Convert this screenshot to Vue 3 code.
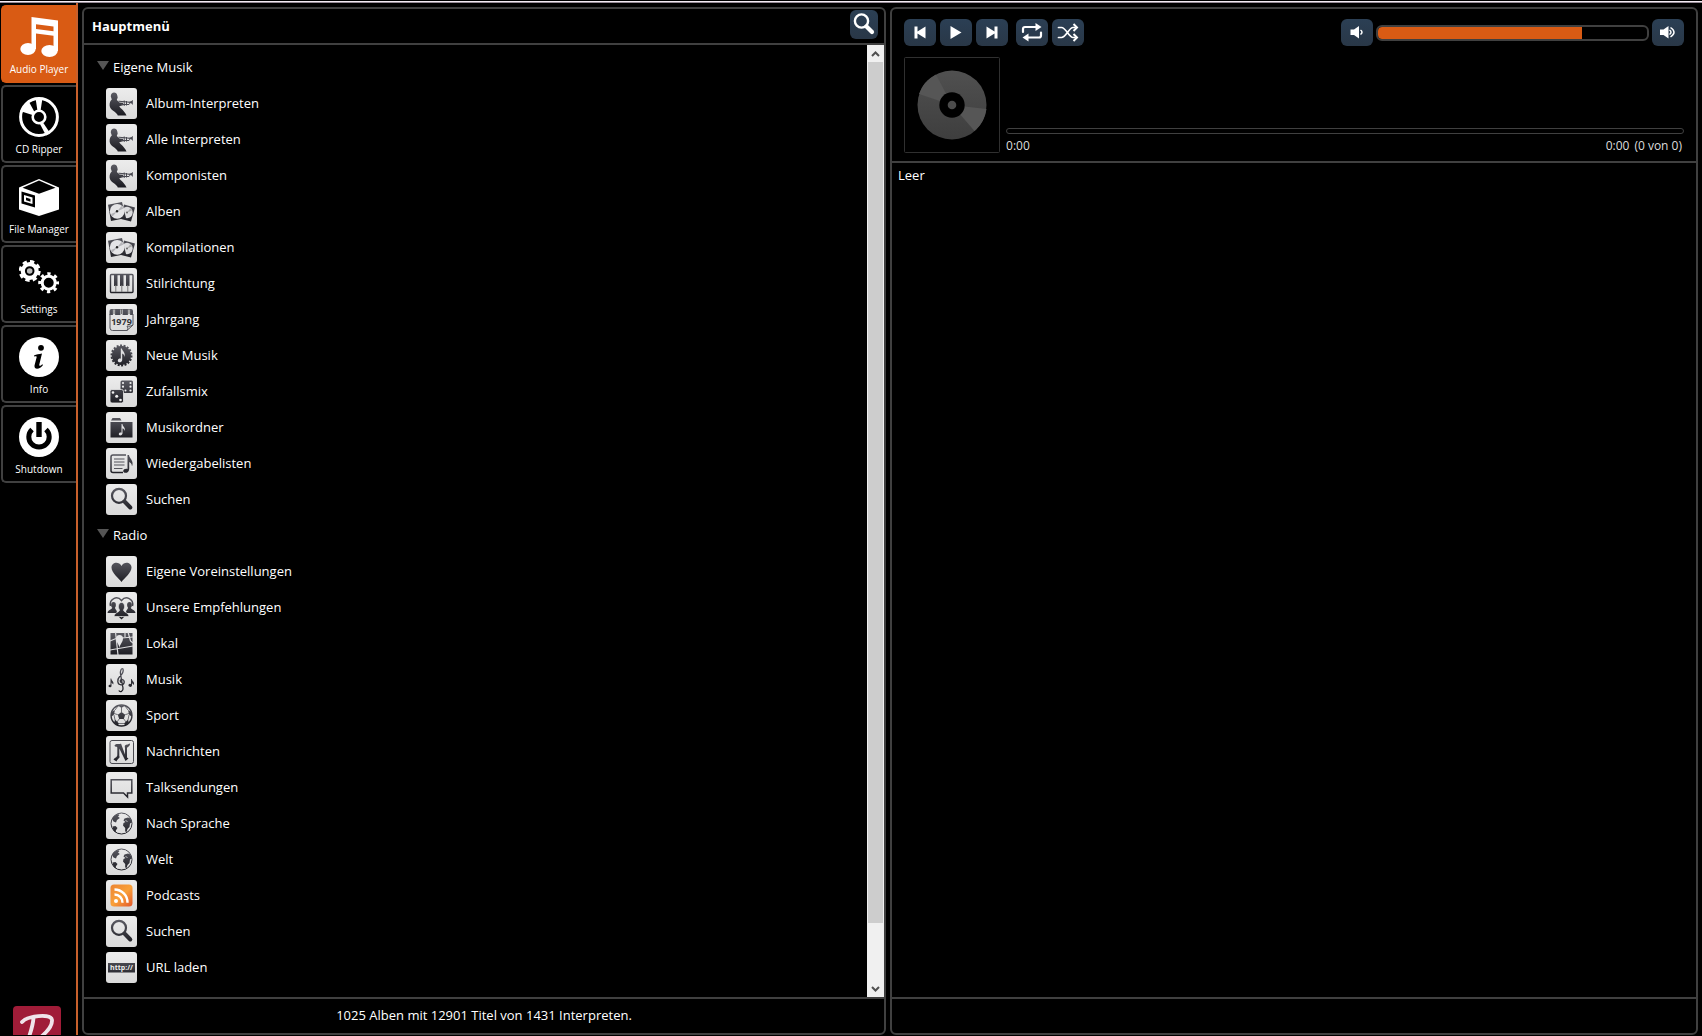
<script setup>
import { ref } from 'vue'

const tabs = [
  { label: 'Audio Player', icon: 'player' },
  { label: 'CD Ripper', icon: 'ripper' },
  { label: 'File Manager', icon: 'files' },
  { label: 'Settings', icon: 'settings' },
  { label: 'Info', icon: 'info' },
  { label: 'Shutdown', icon: 'power' },
]
const activeTab = ref('player')

const groups = [
  {
    title: 'Eigene Musik',
    items: [
      { label: 'Album-Interpreten', icon: 'artist' },
      { label: 'Alle Interpreten', icon: 'artist' },
      { label: 'Komponisten', icon: 'artist' },
      { label: 'Alben', icon: 'album' },
      { label: 'Kompilationen', icon: 'album' },
      { label: 'Stilrichtung', icon: 'piano' },
      { label: 'Jahrgang', icon: 'year' },
      { label: 'Neue Musik', icon: 'new' },
      { label: 'Zufallsmix', icon: 'dice' },
      { label: 'Musikordner', icon: 'folder' },
      { label: 'Wiedergabelisten', icon: 'playlist' },
      { label: 'Suchen', icon: 'search' },
    ],
  },
  {
    title: 'Radio',
    items: [
      { label: 'Eigene Voreinstellungen', icon: 'heart' },
      { label: 'Unsere Empfehlungen', icon: 'people' },
      { label: 'Lokal', icon: 'map' },
      { label: 'Musik', icon: 'clef' },
      { label: 'Sport', icon: 'ball' },
      { label: 'Nachrichten', icon: 'news' },
      { label: 'Talksendungen', icon: 'talk' },
      { label: 'Nach Sprache', icon: 'globe' },
      { label: 'Welt', icon: 'globe' },
      { label: 'Podcasts', icon: 'rss' },
      { label: 'Suchen', icon: 'search' },
      { label: 'URL laden', icon: 'url' },
    ],
  },
  { title: '', items: [] },
]

const transport = [
  { label: 'Zurück', icon: 'prev' },
  { label: 'Wiedergabe', icon: 'play' },
  { label: 'Weiter', icon: 'next' },
  { label: 'Wiederholen', icon: 'repeat' },
  { label: 'Zufall', icon: 'shuffle' },
]
const volume = ref(76)
</script>

<template>
  <div class="shell">
    <svg class="sprite" width="0" height="0" aria-hidden="true">
      <defs>
        <linearGradient id="ink" gradientUnits="userSpaceOnUse" x1="0" y1="4" x2="0" y2="27">
          <stop offset="0" stop-color="#5c5c64" /><stop offset="1" stop-color="#1c1c22" />
        </linearGradient>
        <linearGradient id="feed" gradientUnits="userSpaceOnUse" x1="5" y1="5" x2="26" y2="27">
          <stop offset="0" stop-color="#ec8532" /><stop offset=".5" stop-color="#f9a13a" /><stop offset="1" stop-color="#e2562a" />
        </linearGradient>
        <linearGradient id="disc" x1="0" y1="0" x2="0" y2="1">
          <stop offset="0" stop-color="#505050" /><stop offset="1" stop-color="#3e3e3e" />
        </linearGradient>

        <!-- navigation, 40 x 40 -->
        <symbol id="player" viewBox="0 0 40 40">
          <path fill="#fff" fill-rule="evenodd" d="M12.5 0L39 3.5V34H34.5V18.8L17 16.5V32H12.5ZM17 7.2V12L34.5 14.2V9.5Z" />
          <ellipse cx="9" cy="32" rx="7.7" ry="6" fill="#fff" /><ellipse cx="30.5" cy="34" rx="8.2" ry="6" fill="#fff" />
        </symbol>
        <symbol id="ripper" viewBox="0 0 40 40">
          <circle cx="20" cy="20" r="18.4" fill="none" stroke="#fff" stroke-width="3" />
          <circle cx="20" cy="20" r="6.3" fill="none" stroke="#fff" stroke-width="2.6" />
          <path fill="#fff" d="M1 14L9.500 4L15.500 15L13.500 18ZM16.500 1H23.500L21.500 14H18.500Z" />
          <path fill="#fff" d="M21 27L24 25.500L31 36L27 38.500Z" />
        </symbol>
        <symbol id="files" viewBox="0 0 40 40">
          <path fill="#fff" d="M20 2L40 10.500V32.500L20 39L0 32.500V10.500Z" />
          <path fill="#000" d="M20 3.600L36.500 10.800L20 16.800L3.500 10.800Z" />
          <path fill="#000" d="M2.500 14.500L16 18.500V30.500L2.500 26.500Z" />
          <path fill="#fff" d="M5 18L13.500 20.500V27L5 24.500Z" /><path fill="#000" d="M7 20.500L11.500 22V24.800L7 23.300Z" />
        </symbol>
        <symbol id="settings" viewBox="0 0 40 40">
          <circle cx="10.700" cy="14" r="9" fill="#fff" />
          <circle cx="10.700" cy="14" r="9.300" fill="none" stroke="#fff" stroke-width="3.400" stroke-dasharray="4.200 3.100" />
          <circle cx="10.700" cy="14" r="3.800" fill="#bbb" stroke="#000" stroke-width="2" />
          <circle cx="29.700" cy="25.700" r="6.500" fill="none" stroke="#fff" stroke-width="3" />
          <circle cx="29.700" cy="25.700" r="8.800" fill="none" stroke="#fff" stroke-width="3.400" stroke-dasharray="3.200 3.710" stroke-dashoffset="1.600" />
        </symbol>
        <symbol id="info" viewBox="0 0 40 40">
          <circle cx="20" cy="20" r="20" fill="#fff" />
          <circle cx="22" cy="10.800" r="2.900" fill="#000" />
          <path fill="#000" d="M15 18.500C17.500 17.500 20 17 23 16.500L20.300 27.500C20 29.500 21.500 29.200 23.200 27.200L24 28C21.500 32 15 33.500 15.500 28.500L17.700 20C17.800 19 16.500 19.200 15 19.400Z" />
        </symbol>
        <symbol id="power" viewBox="0 0 40 40">
          <circle cx="20" cy="20" r="20" fill="#fff" />
          <path d="M13 12.500A10.200 10.200 0 1 0 27 12.500" fill="none" stroke="#000" stroke-width="5" /><path d="M20 5V20" stroke="#000" stroke-width="5.400" />
        </symbol>

        <!-- menu tiles, 31 x 31 -->
        <symbol id="artist" viewBox="0 0 31 31">
          <g fill="url(#ink)">
            <path d="M4.800 8.500C4.500 3.500 11 3.500 11.300 7.500L11.700 9.500L10.800 12L13.500 14.500L17 14.800V17.200L13.200 18.200C15 21 18.500 22.500 20.500 27.500H11.800C11 24 4 22.500 3.600 17.500C3.400 14.500 4.500 12.500 5.800 11.500Z" />
          </g>
          <path d="M12.500 13.200L24.500 14.300M15 16.500H23Q24 15.500 23 14.500M18.200 12.500V18M20.500 13V17.500" fill="none" stroke="#484850" stroke-width="1" />
          <path fill="#484850" d="M23.500 13.800Q26 13.500 26.800 11.800V17Q26 15.200 23.500 15Z" />
        </symbol>
        <symbol id="album" viewBox="0 0 31 31">
          <path fill="url(#ink)" d="M18 8.500L29 11.500L25 25.500L15 23Z" /><circle cx="21" cy="16.500" r="5.700" fill="#dcdcde" />
          <path fill="#aaa" d="M21 16.500L24.500 12L26 14.500Z" />
          <path fill="url(#ink)" d="M2 8.800L16 6L20 22L5 25Z" /><circle cx="11.200" cy="15.300" r="7.400" fill="#e4e4e6" />
          <path fill="#b4b4b8" d="M11 15.500L15.500 10L17.500 12.500ZM11 15.500L6.500 20.500L5 18Z" /><circle cx="11" cy="15.300" r="1.200" fill="#222" /><circle cx="21" cy="16.500" r="1" fill="#666" />
        </symbol>
        <symbol id="piano" viewBox="0 0 31 31">
          <rect x="4.500" y="6.500" width="22.500" height="18" rx="1" fill="none" stroke="url(#ink)" stroke-width="1.400" />
          <path fill="url(#ink)" d="M8 6H11.500V18H8ZM14 6H17.500V18H14ZM20 6H23.500V18H20Z" />
          <path d="M9.800 17V24M15.800 17V24M21.800 17V24" stroke="#777" />
        </symbol>
        <symbol id="year" viewBox="0 0 31 31">
          <path fill="url(#ink)" d="M3.500 11V7Q3.500 5 5.500 5H25Q27 5 27 7V11Z" />
          <path d="M8 5.500V11M15.500 5.500V11M23 5.500V11" stroke="#ddd" stroke-width="2.200" /><path d="M8 5V10M15.500 5V10M23 5V10" stroke="#555" stroke-width=".8" />
          <path d="M4 10V24Q4 26.500 6.500 26.500H21L27 21V10M21 26.500Q23 24 21 22Q24 23 27 21" fill="none" stroke="#55555c" />
          <text x="15.500" y="20.500" text-anchor="middle" font-family="Open Sans, sans-serif" font-size="9" font-weight="bold" fill="#333338">1979</text>
        </symbol>
        <symbol id="new" viewBox="0 0 31 31">
          <circle cx="15.500" cy="15.500" r="9.700" fill="url(#ink)" /><circle cx="15.500" cy="15.500" r="10" fill="none" stroke="url(#ink)" stroke-width="2" stroke-dasharray="2 1.490" />
          <path d="M14.800 8.500H16C16 11 20 12.500 18.500 17C18.500 14.500 17 14 16.200 13.500V20C16 23 11.500 23 11.800 20.500C12 18.500 14 18.200 14.800 18.700Z" fill="#e0e0e2" />
        </symbol>
        <symbol id="dice" viewBox="0 0 31 31">
          <rect x="14.500" y="4.500" width="12.500" height="12.500" rx="1.500" fill="url(#ink)" /><rect x="4" y="13.500" width="13.500" height="13.500" rx="2" fill="url(#ink)" stroke="#e6e6e6" stroke-width=".8" />
          <g fill="#eee"><circle cx="17" cy="7" r="1.100" /><circle cx="17" cy="10.700" r="1.100" /><circle cx="24.500" cy="7" r="1.100" /><circle cx="24.500" cy="10.700" r="1.100" /><circle cx="24.500" cy="14.500" r="1.100" /><circle cx="19.500" cy="14.500" r="1" /><circle cx="7" cy="16.500" r="1.300" /><circle cx="10.700" cy="20.200" r="1.500" /><circle cx="14.500" cy="24" r="1.300" /></g>
        </symbol>
        <symbol id="folder" viewBox="0 0 31 31">
          <path fill="url(#ink)" d="M5 8.500L6.500 6H14L15.500 8.500ZM4.500 10H26.500V25.500H4.500Z" />
          <path fill="#e0e0e2" d="M15.500 12H16.500C16.500 14.500 20 15.500 18.500 19C18.500 17 17 16.500 16.500 16.200V21.500C16 24 12.500 24 12.800 22C13 20.500 14.800 20.200 15.500 20.700Z" />
        </symbol>
        <symbol id="playlist" viewBox="0 0 31 31">
          <path d="M20 7H7Q5 7 5 9V22.500Q5 24.500 7 24.500H17" fill="none" stroke="url(#ink)" stroke-width="1.500" />
          <path d="M8 11H18.500M8 14H18.500M8 17H18.500M8 20.500H16.500" stroke="#55555c" stroke-width="1.200" />
          <path fill="url(#ink)" d="M21.500 7H23C23 10 28.500 13 26 18.500C26 15.500 24 14.500 23.200 14V21C23 26 17 25.500 17.200 23C17.400 21 20 20.200 21.500 21Z" />
        </symbol>
        <symbol id="search" viewBox="0 0 31 31">
          <circle cx="13" cy="11.800" r="7" fill="none" stroke="url(#ink)" stroke-width="2.200" /><path d="M18.500 17.500L24.300 23.500" stroke="url(#ink)" stroke-width="4" stroke-linecap="round" />
        </symbol>
        <symbol id="heart" viewBox="0 0 31 31">
          <path fill="url(#ink)" d="M15.500 26C13 22.500 5.500 17 5.500 11.500C5.500 6 13 5 15.500 10C18 5 25.500 6 25.500 11.500C25.500 17 18 22.500 15.500 26Z" />
        </symbol>
        <symbol id="people" viewBox="0 0 31 31">
          <path d="M4.500 14C3 7 11 3 15.500 8.500C20 3 28 7 26.500 14M12 23L15.500 26.500L19 23" fill="none" stroke="url(#ink)" stroke-width="1.500" />
          <g fill="url(#ink)"><ellipse cx="7.500" cy="13" rx="2.400" ry="3" /><ellipse cx="23.500" cy="13" rx="2.400" ry="3" /><path d="M1.500 21C2 17.500 6 18 6.500 15H9C9 18 11 17.500 11 21ZM29.500 21C29 17.500 25 18 24.500 15H22C22 18 20 17.500 20 21Z" /></g>
          <path fill="url(#ink)" stroke="#e4e4e4" stroke-width=".7" d="M8 24.500C8.500 20 13.500 20.500 13.500 18C11.500 15 12.500 10.500 15.500 10.500S19.500 15 17.500 18C17.500 20.500 22.500 20 23 24.500Z" />
        </symbol>
        <symbol id="map" viewBox="0 0 31 31">
          <rect x="4.500" y="5" width="22" height="21.500" fill="url(#ink)" />
          <path d="M4 13L10 10.500L27 9M9.500 4L12 27M4 22L27 18M22 4L24.500 13L27 15M19 4V9" fill="none" stroke="#dcdcde" stroke-width="1.200" />
          <path fill="#e4e4e6" d="M13.500 20C13 16 10 14 10 10.500A3.500 3.500 0 0 1 17 10.500C17 14 14 16 13.500 20Z" />
        </symbol>
        <symbol id="clef" viewBox="0 0 31 31">
          <path d="M15.500 18.500C13.500 18 14 15 16.200 15.500C19.500 16.500 18.500 21 15 20.800C11 20.500 11 15.500 13.500 12.800C16 10.500 18 8 17 5C15.500 3.500 14 7 14.500 10L17 24C17.500 27.500 14 28.500 12.800 26.500" fill="none" stroke="url(#ink)" stroke-width="1.300" />
          <g fill="url(#ink)"><path d="M4.500 14.500H5.300C5.500 17 8.500 17.500 7.200 20.500L5.500 18.500V22A1.500 1.300 0 1 1 4.500 20.800ZM25 15H25.800C26 17.500 29.500 18 27.500 21L26 19V21.500A1.800 1.500 0 1 1 25 20Z" /></g>
        </symbol>
        <symbol id="ball" viewBox="0 0 31 31">
          <circle cx="15.500" cy="15.500" r="10.500" fill="none" stroke="url(#ink)" stroke-width="1.300" />
          <path fill="url(#ink)" d="M15.500 12L19.200 14.700L17.800 19H13.200L11.800 14.700ZM12 5.500H19L15.500 8ZM5 12L9 10L8 14.500L5 17ZM26 12L22 10L23 14.500L26 17ZM8 23L9 19.500L13 23.500L12 25.500ZM23 23L22 19.500L18 23.500L19 25.500Z" />
          <path d="M15.500 12V8M19.200 14.700L23 13.500M17.800 19L20 22M13.200 19L11 22M11.800 14.700L8 13.500M9 10L12 6M22 10L19 6M8 15L9 20M23 15L22 20M13 23.500H18" stroke="#55555c" stroke-width=".8" />
        </symbol>
        <symbol id="news" viewBox="0 0 31 31">
          <rect x="4" y="4.500" width="23.500" height="23" rx="2" fill="none" stroke="#4a4a50" stroke-width="1" />
          <path fill="url(#ink)" d="M8.500 9.500C10.500 6.500 13 9 15 7.500L19 18.500V12C18.500 10 18.500 9 21 8.500C22 9 22.500 7.500 24 7.500C24 10.500 22 10.500 21 12V21.500L22.500 22.500L19.500 25L13.300 12.500V20C14.500 22 12 22 10.500 25.500L7.500 23.500C9 21 11 22 11.300 19V11.500C10.500 10 9.500 12 8.500 9.500Z" />
        </symbol>
        <symbol id="talk" viewBox="0 0 31 31">
          <path d="M5.200 7.700H25.800V21H21.500V25L17.500 21H5.200Z" fill="none" stroke="url(#ink)" stroke-width="1.500" />
        </symbol>
        <symbol id="globe" viewBox="0 0 31 31">
          <circle cx="15.500" cy="15.500" r="10.500" fill="none" stroke="url(#ink)" stroke-width="1" />
          <path fill="url(#ink)" d="M6 11C7 8.500 9 7 12 6L13.500 7L12 8.500L13.800 10L11 12L10 14.500L7.500 13.500ZM6.500 18.500L9.500 18L11.500 20L9.800 22.500V24.500C8 23.500 6.500 21.500 6.500 18.500ZM17.500 12.500L18.500 10.500L22 9.500L24.500 10.500L25.800 14.500L24 15.500L23.500 19L21.500 21L20.500 24L19.200 23.500V20L17 17.500L17.500 15L19.500 14Z" />
          <path d="M19.500 12.500L21.500 13.500" stroke="#ddd" stroke-width=".8" />
        </symbol>
        <symbol id="rss" viewBox="0 0 31 31">
          <rect x="4.500" y="4.500" width="22" height="22" rx="3.500" fill="url(#feed)" />
          <circle cx="10" cy="21" r="2" fill="#fff" /><path d="M8.500 14.500A8 8 0 0 1 16.500 22.800M8.500 9.500A13 13 0 0 1 21.500 22.800" fill="none" stroke="#fff" stroke-width="2.400" />
        </symbol>
        <symbol id="url" viewBox="0 0 31 31">
          <rect x="2" y="11" width="27" height="9.500" fill="url(#ink)" />
          <text x="15.500" y="18" text-anchor="middle" font-family="Open Sans, sans-serif" font-size="7" font-weight="bold" fill="#eee">http://</text>
        </symbol>

        <!-- player controls, 32 x 27 -->
        <symbol id="prev" viewBox="0 0 32 27"><path fill="#fff" d="M10.500 7.500H13.500V12.500L21.500 7.500V19.500L13.500 14.500V19.500H10.500Z" /></symbol>
        <symbol id="play" viewBox="0 0 32 27"><path fill="#fff" d="M10.500 7L21.500 13.500L10.500 20Z" /></symbol>
        <symbol id="next" viewBox="0 0 32 27"><path fill="#fff" d="M21.500 7.500H18.500V12.500L10.500 7.500V19.500L18.500 14.500V19.500H21.500Z" /></symbol>
        <symbol id="repeat" viewBox="0 0 32 27">
          <path d="M7 13V10Q7 8 9 8H20M25 13.500V16.500Q25 18.500 23 18.500H11" fill="none" stroke="#fff" stroke-width="2.200" stroke-linecap="round" />
          <path fill="#fff" d="M19.500 4L25.500 8L19.500 12ZM12.500 14.500L6.500 18.500L12.500 22.500Z" />
        </symbol>
        <symbol id="shuffle" viewBox="0 0 32 27">
          <path d="M6.500 8.500H9.500C14 8.500 17 18.500 21 18.500H23M6.500 18.500H9.500C14 18.500 17 8.500 21 8.500H23" fill="none" stroke="#fff" stroke-width="1.700" stroke-linecap="round" />
          <path d="M21.500 5L25 8.500L21.500 12M21.500 15L25 18.500L21.500 22" fill="none" stroke="#fff" stroke-width="2" />
        </symbol>
        <symbol id="quiet" viewBox="0 0 32 27"><path fill="#fff" d="M9.500 10.500H13L18 7V19.500L13 16H9.500Z" /><path d="M19.500 11Q22.500 13.200 19.500 15.500" fill="none" stroke="#fff" stroke-width="1.500" /></symbol>
        <symbol id="loud" viewBox="0 0 32 27"><path fill="#fff" d="M8 10.500H11.500L16.500 7V19.500L11.500 16H8Z" /><path d="M17.500 11Q20.500 13.200 17.500 15.500M18.500 8.500Q25.500 13.200 18.500 18" fill="none" stroke="#fff" stroke-width="1.500" /></symbol>
        <symbol id="find" viewBox="0 0 28 29"><circle cx="11.500" cy="11" r="6.600" fill="none" stroke="#fff" stroke-width="2.400" /><path d="M16.500 16.500L22 22" stroke="#fff" stroke-width="4.200" stroke-linecap="round" /></symbol>
      </defs>
    </svg>

    <nav class="side">
      <button v-for="t in tabs" :key="t.icon" type="button" class="tab" :class="{ active: t.icon === activeTab }" @click="activeTab = t.icon">
        <svg width="40" height="40" aria-hidden="true"><use :href="'#' + t.icon" /></svg>
        <span>{{ t.label }}</span>
      </button>
      <svg class="logo" width="48" height="29" viewBox="0 0 48 29" aria-hidden="true">
        <rect width="48" height="48" rx="4" fill="#a01c38" />
        <path d="M9 16C14 10 38 7 39 14C39.500 20 35 25 28 31M20.500 12C20 19 18 25 16 31" fill="none" stroke="#f0e4ea" stroke-width="3.800" stroke-linecap="round" />
      </svg>
    </nav>

    <section class="panel library">
      <header class="head">
        <h1>Hauptmenü</h1>
        <button type="button" class="ctl find" aria-label="Suchen"><svg width="28" height="29" aria-hidden="true"><use href="#find" /></svg></button>
      </header>
      <div class="body">
        <div class="tree">
          <template v-for="(g, n) in groups" :key="n">
            <h2 class="group"><span class="arrow"></span>{{ g.title }}</h2>
            <button v-for="(item, i) in g.items" :key="i" type="button" class="item">
              <svg class="tile" width="31" height="31" aria-hidden="true"><use :href="'#' + item.icon" /></svg>
              {{ item.label }}
            </button>
          </template>
        </div>
        <div class="scroll">
          <button type="button" aria-label="Nach oben"><svg width="9" height="6" viewBox="0 0 9 6"><path d="M1 5L4.500 1.500L8 5" fill="none" stroke="#505050" stroke-width="2" /></svg></button>
          <div class="rail"><div class="thumb"></div></div>
          <button type="button" aria-label="Nach unten"><svg width="9" height="6" viewBox="0 0 9 6"><path d="M1 1L4.500 4.500L8 1" fill="none" stroke="#505050" stroke-width="2" /></svg></button>
        </div>
      </div>
      <footer class="foot">1025 Alben mit 12901 Titel von 1431 Interpreten.</footer>
    </section>

    <section class="panel now">
      <header class="deck">
        <div class="bar">
          <button v-for="c in transport" :key="c.icon" type="button" class="ctl" :class="c.icon" :aria-label="c.label">
            <svg width="32" height="27" aria-hidden="true"><use :href="'#' + c.icon" /></svg>
          </button>
          <div class="volume">
            <button type="button" class="ctl" aria-label="Leiser"><svg width="32" height="27" aria-hidden="true"><use href="#quiet" /></svg></button>
            <input v-model="volume" type="range" min="0" max="100" aria-label="Lautstärke" :style="{ '--level': volume + '%' }" />
            <button type="button" class="ctl" aria-label="Lauter"><svg width="32" height="27" aria-hidden="true"><use href="#loud" /></svg></button>
          </div>
        </div>
        <div class="track">
          <svg class="cover" width="96" height="96" viewBox="0 0 96 96" aria-hidden="true">
            <rect x=".5" y=".5" width="95" height="95" rx="1" fill="#000" stroke="#303030" />
            <circle cx="48" cy="48" r="34.500" fill="url(#disc)" />
            <path fill="#565656" d="M48 48L15 37A34.500 34.500 0 0 1 32 17.500ZM48 48L82.500 52A34.500 34.500 0 0 1 70.500 74Z" />
            <circle cx="48" cy="48" r="12.700" fill="#000" /><circle cx="48" cy="48" r="4.300" fill="#4c4c4c" />
          </svg>
          <div class="timing">
            <progress value="0" max="100" aria-label="Position"></progress>
            <div class="times"><span>0:00</span><span class="total"><span>0:00</span><span>(0 von 0)</span></span></div>
          </div>
        </div>
      </header>
      <div class="queue">Leer</div>
      <footer class="foot"></footer>
    </section>
  </div>
</template>

<style>
html,
body {
  background: #000;
}
</style>

<style scoped>
.shell {
  display: flex;
  box-sizing: border-box;
  height: 100vh;
  padding: 3px 4px 1px 1px;
  overflow: hidden;
  background: linear-gradient(#000 1px, #f4ecf4 1px, #f4ecf4 2px, #958a95 2px, #958a95 3px, #000 3px);
  color: #fff;
  font: 13px/20px "Open Sans", "Noto Sans", sans-serif;
}
.sprite {
  position: absolute;
}
button {
  margin: 0;
  padding: 0;
  border: 0;
  background: none;
  color: inherit;
  font: inherit;
  cursor: pointer;
}
svg {
  display: block;
}
.side {
  display: flex;
  flex: none;
  flex-direction: column;
  gap: 2px;
  box-sizing: border-box;
  width: 77px;
  padding-top: 2px;
  border-right: 2px solid #c8602c;
}
.tab {
  display: flex;
  flex: none;
  flex-direction: column;
  align-items: center;
  box-sizing: border-box;
  height: 78px;
  padding-top: 10px;
  padding-right: 1px;
  border: 2px solid #404040;
  border-right: 0;
  border-radius: 5px 0 0 5px;
  font-size: 10px;
  line-height: 14px;
}
.tab span {
  margin-top: 5px;
  white-space: nowrap;
}
.tab.active {
  border-color: #d95b14;
  background: #d95b14;
}
.logo {
  flex: none;
  margin: auto 0 0 12px;
}
.panel {
  display: flex;
  flex-direction: column;
  box-sizing: border-box;
  min-width: 0;
  margin-top: 4px;
  margin-left: 4px;
  border: 2px solid #404040;
  border-radius: 6px;
}
.library {
  flex: 804 1 0;
}
.now {
  flex: 808 1 0;
}
.head {
  display: flex;
  flex: none;
  align-items: center;
  justify-content: space-between;
  height: 34px;
  padding: 0 6px 0 8px;
  border-bottom: 2px solid #404040;
}
h1 {
  margin: 0;
  font-size: 13px;
  font-weight: bold;
}
.ctl {
  flex: none;
  border-radius: 6px;
  background: linear-gradient(#2b3f54, #293747);
}
.find {
  margin-bottom: 3px;
}
.body {
  display: flex;
  flex: 1;
  min-height: 0;
}
.tree {
  flex: 1;
  padding-top: 4px;
  overflow: hidden;
}
.group {
  display: flex;
  align-items: center;
  gap: 4px;
  height: 36px;
  margin: 0;
  padding-left: 13px;
  font-size: 13px;
  font-weight: normal;
}
.arrow {
  margin-bottom: 3px;
  border: 6px solid transparent;
  border-top: 9px solid #555;
  border-bottom: 0;
}
.item {
  display: flex;
  align-items: center;
  gap: 9px;
  width: 100%;
  height: 36px;
  padding-left: 22px;
}
.tile {
  flex: none;
  border-radius: 3px;
  background: linear-gradient(#ececec, #dadada);
}
.scroll {
  display: flex;
  flex: none;
  flex-direction: column;
  width: 17px;
  background: #f0f0f0;
}
.scroll button {
  display: flex;
  flex: none;
  align-items: center;
  justify-content: center;
  height: 17px;
}
.rail {
  flex: 1;
  padding: 0 1px;
}
.thumb {
  height: 93.8%;
  background: #cdcdcd;
}
.foot {
  display: flex;
  flex: none;
  align-items: center;
  justify-content: center;
  box-sizing: border-box;
  height: 36px;
  padding-bottom: 2px;
  border-top: 2px solid #404040;
}
.deck {
  flex: none;
  height: 152px;
  padding: 0 12px;
  border-bottom: 2px solid #404040;
}
.bar {
  display: flex;
  gap: 4px;
  padding-top: 10px;
}
.repeat {
  margin-left: 4px;
}
.volume {
  display: flex;
  align-items: center;
  gap: 3px;
  margin-left: auto;
}
input {
  box-sizing: border-box;
  width: 273px;
  height: 16px;
  margin: 0;
  border: 2px solid #404040;
  border-radius: 6px;
  background: linear-gradient(to right, #d95b14 var(--level), #000 var(--level)) padding-box;
  appearance: none;
}
input::-webkit-slider-thumb {
  width: 1px;
  height: 12px;
  opacity: 0;
  appearance: none;
}
.track {
  display: flex;
  gap: 6px;
  margin-top: 11px;
}
.cover {
  flex: none;
}
.timing {
  display: flex;
  flex: 1;
  flex-direction: column;
  padding-top: 71px;
}
progress {
  display: block;
  box-sizing: border-box;
  width: 100%;
  height: 6px;
  border: 1px solid #404040;
  border-radius: 3px;
  background: #000;
  appearance: none;
}
progress::-webkit-progress-bar {
  background: transparent;
}
.times {
  display: flex;
  justify-content: space-between;
  padding: 4px 2px 0 0;
  color: #ddd;
  font-size: 12px;
  line-height: 16px;
}
.total {
  display: flex;
  gap: 5px;
}
.queue {
  flex: 1;
  padding: 2px 6px;
}
</style>
